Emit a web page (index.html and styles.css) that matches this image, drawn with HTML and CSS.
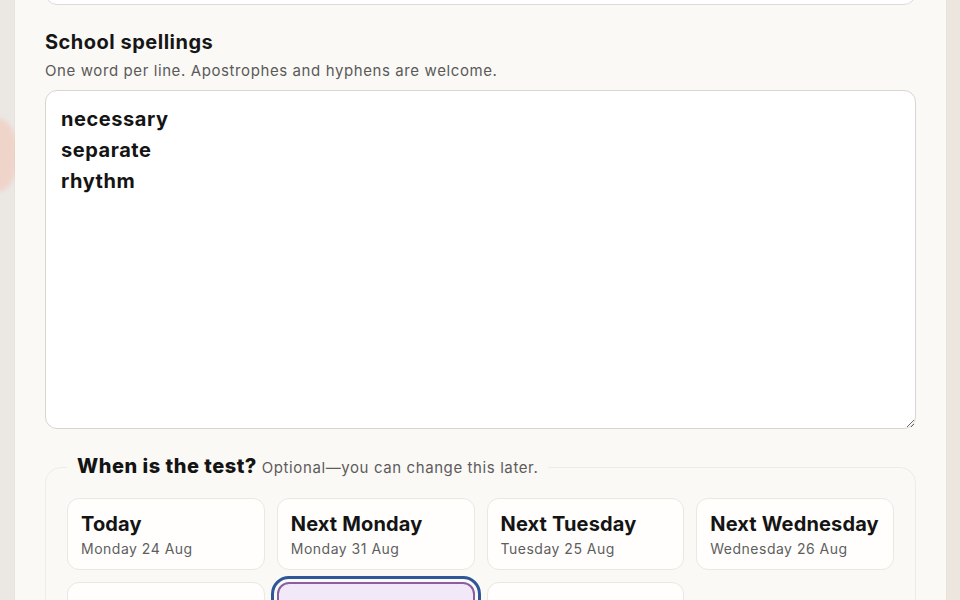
FILE: index.html
```html
<!DOCTYPE html>
<html lang="en">
<head>
<meta charset="utf-8">
<title>Add spellings</title>
<link rel="stylesheet" href="styles.css">
</head>
<body>
  <div class="backdrop-blob"></div>
  <main class="panel">
    <div class="prev-field"></div>

    <section class="field">
      <label class="field-label" for="words">School spellings</label>
      <p class="field-hint">One word per line. Apostrophes and hyphens are welcome.</p>
      <textarea id="words" class="word-box" spellcheck="false">necessary
separate
rhythm</textarea>
    </section>

    <fieldset class="test-date">
      <legend class="test-legend"><strong>When is the test?</strong> <span>Optional—you can change this later.</span></legend>
      <div class="date-grid">
        <button class="date-card" type="button"><span class="date-title">Today</span><span class="date-sub">Monday 24 Aug</span></button>
        <button class="date-card" type="button"><span class="date-title">Next Monday</span><span class="date-sub">Monday 31 Aug</span></button>
        <button class="date-card" type="button"><span class="date-title">Next Tuesday</span><span class="date-sub">Tuesday 25 Aug</span></button>
        <button class="date-card" type="button"><span class="date-title">Next Wednesday</span><span class="date-sub">Wednesday 26 Aug</span></button>
        <button class="date-card" type="button"><span class="date-title">Next Thursday</span><span class="date-sub">Thursday 27 Aug</span></button>
        <button class="date-card is-selected" type="button"><span class="date-title">Next Friday</span><span class="date-sub">Friday 28 Aug</span></button>
        <button class="date-card" type="button"><span class="date-title">Next week</span><span class="date-sub">Monday 31 Aug</span></button>
      </div>
    </fieldset>
  </main>
</body>
</html>
```

FILE: styles.css
```css
* { box-sizing: border-box; }

html, body {
  margin: 0;
  height: 100%;
}

body {
  background: linear-gradient(90deg, #ebe8e4 0%, #ece8e3 60%, #ede6df 100%);
  font-family: Inter, "Noto Sans", "Liberation Sans", sans-serif;
  color: #161616;
  overflow: hidden;
  position: relative;
}

/* soft pink shape peeking out from behind the panel */
.backdrop-blob {
  position: absolute;
  left: -22px;
  top: 118px;
  width: 40px;
  height: 74px;
  border-radius: 50%;
  background: #efd4ca;
  filter: blur(2px);
}

.panel {
  position: relative;
  margin: 0 14px 0 15px;
  min-height: 100%;
  padding: 0 30px;
  background: #fbf9f5;
  box-shadow: 0 0 0 1px rgba(0, 0, 0, 0.02);
}

.prev-field {
  height: 40px;
  margin-top: -35px;
  border: 1px solid #dedbd6;
  border-radius: 12px;
  background: #ffffff;
}

.field {
  display: flex;
  flex-direction: column;
}

.field-label {
  margin-top: 24px;
  font-size: 20px;
  line-height: 26px;
  font-weight: 700;
  letter-spacing: 0.5px;
}

.field-hint {
  margin: 6px 0 9px;
  font-size: 15px;
  line-height: 20px;
  letter-spacing: 0.6px;
  color: #5a5a5a;
}

.word-box {
  display: block;
  width: 100%;
  height: 339px;
  padding: 13px 15px;
  border: 1px solid #d8d5d0;
  border-radius: 12px;
  background: #ffffff;
  font-family: Inter, "Noto Sans", "Liberation Sans", sans-serif;
  font-size: 20px;
  font-weight: 700;
  line-height: 31px;
  letter-spacing: 0.55px;
  color: #141414;
  resize: vertical;
  outline: none;
}

.test-date {
  margin: 24px 0 0;
  padding: 17px 21px 20px;
  border: 1px solid #efebe5;
  border-radius: 16px;
}

.test-legend {
  padding: 0 10px;
  font-size: 15px;
  line-height: 26px;
  letter-spacing: 0.6px;
  color: #5c5c5c;
}

.test-legend strong {
  font-size: 20px;
  font-weight: 800;
  color: #141414;
  letter-spacing: 0.5px;
}

.date-grid {
  display: grid;
  grid-template-columns: repeat(4, 1fr);
  gap: 12px;
}

.date-card {
  display: flex;
  flex-direction: column;
  align-items: flex-start;
  gap: 3px;
  height: 72px;
  padding: 13px 12px 13px 13px;
  border: 1px solid #ebe8e2;
  border-radius: 12px;
  background: #fffefd;
  font-family: inherit;
  text-align: left;
  cursor: pointer;
}

.date-title {
  font-size: 20px;
  line-height: 24px;
  font-weight: 700;
  color: #141414;
  letter-spacing: 0.15px;
  white-space: nowrap;
}

.date-sub {
  font-size: 14px;
  line-height: 20px;
  letter-spacing: 0.5px;
  color: #5e5e5e;
  white-space: nowrap;
}

.date-card.is-selected {
  background: #f1e9f8;
  border: 2px solid #8b5e9f;
  outline: 3px solid #2e5797;
  outline-offset: 3px;
}
```
